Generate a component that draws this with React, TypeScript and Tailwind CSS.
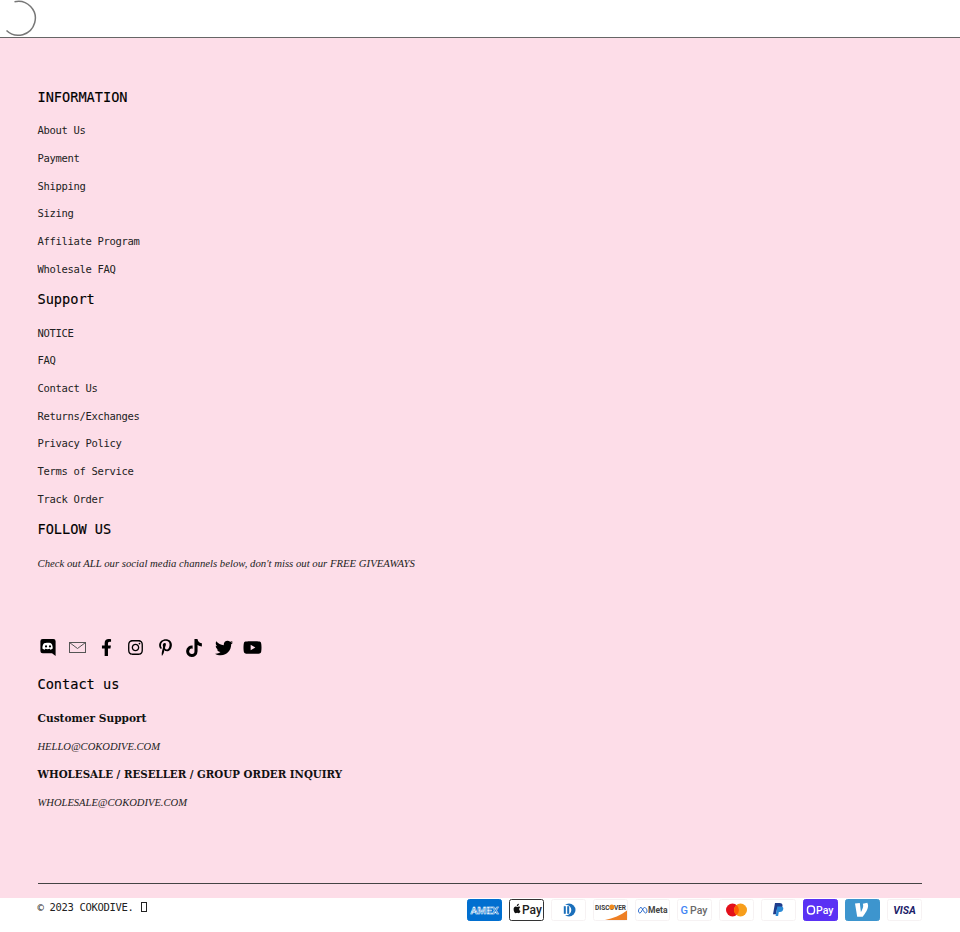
import { FaFacebookF, FaInstagram, FaPinterestP, FaTiktok, FaTwitter, FaYoutube } from "react-icons/fa";

const mono = "font-['DejaVu_Sans_Mono','Liberation_Mono',monospace]";
const serif = "font-['Liberation_Serif','DejaVu_Serif',serif]";
const bold = "font-['DejaVu_Serif',serif] font-bold";

function Heading({ children }: { children: string }) {
  return <h3 className={`${mono} text-[13.6px] leading-[20px] text-black mb-[10.3px] -ml-[0.5px] [-webkit-text-stroke:0.15px_#000]`}>{children}</h3>;
}

function Links({ items }: { items: string[] }) {
  return (
    <ul className="mb-[5.7px]">
      {items.map((t) => (
        <li key={t} className={`${mono} text-[10.5px] tracking-[-0.32px] -ml-[0.5px] leading-[27.7px] text-[#222]`}>{t}</li>
      ))}
    </ul>
  );
}

function Card({ children, bg = "#fff", border = "#f6f2f3" }: { children: React.ReactNode; bg?: string; border?: string }) {
  return (
    <svg width="35" height="22" viewBox="0 0 35 22" className="shrink-0">
      <rect x="0.5" y="0.5" width="34" height="21" rx="2" fill={bg} stroke={border} />
      {children}
    </svg>
  );
}

const sans = "Roboto, 'Liberation Sans', sans-serif";

function Payments() {
  return (
    <div className="flex gap-[7px]">
      <Card bg="#016fd0" border="#016fd0">
        <text x="17.5" y="14.5" textAnchor="middle" fontSize="9.5" fontWeight="700" fontFamily={sans} fill="#016fd0" stroke="#fff" strokeWidth="0.5" textLength="28" lengthAdjust="spacingAndGlyphs">AMEX</text>
      </Card>
      <Card border="#333">
        <path d="M9.2 6.600c.5-.6.8-1.100.7-1.900-.7 0-1.300.4-1.600.9-.4.5-.6 1-.5 1.600.6 0 1-.2 1.400-.6zM9.900 7.600c-.8 0-1.200.4-1.700.4s-1-.4-1.600-.4c-.9 0-2 .9-2 2.600 0 1.800 1.200 4 2.100 4 .5 0 .9-.4 1.500-.4s.9.4 1.500.4c.8 0 1.500-1.300 1.800-2.300-.9-.4-1.300-1.100-1.300-2 0-.8.4-1.400 1-1.700-.4-.5-1-.6-1.300-.6z" fill="#111" />
        <text x="13" y="15" fontSize="12" fontWeight="500" fontFamily={sans} fill="#222">Pay</text>
      </Card>
      <Card>
        <circle cx="18" cy="11" r="6.500" fill="#1a6fbb" />
        <circle cx="15" cy="11" r="5.300" fill="#fff" />
        <rect x="12.800" y="7.200" width="2" height="7.600" fill="#1a6fbb" />
        <rect x="16.200" y="7.200" width="2" height="7.600" fill="#1a6fbb" />
      </Card>
      <Card>
        <path d="M34 11.500 C28 16 20 19.500 12 21 L34 21 Z" fill="#ee7f24" />
        <text x="2" y="10.500" fontSize="7.200" fontWeight="700" fontFamily={sans} fill="#3a3a3a" textLength="31" lengthAdjust="spacingAndGlyphs">DISCOVER</text>
        <circle cx="18.800" cy="8" r="2.500" fill="#f08a1d" />
      </Card>
      <Card>
        <path d="M6 8.500c-1.500 0-2.500 2-2.500 3.500s.8 2 1.500 2c1.700 0 2.500-5.500 4.500-5.500 1.500 0 2.500 2 2.500 3.500s-.8 2-1.500 2c-1.700 0-3-5.500-4.500-5.500z" fill="none" stroke="#1a5fc8" strokeWidth="0.900" />
        <text x="13" y="14.300" fontSize="8.500" fontWeight="700" fontFamily={sans} fill="#444">Meta</text>
      </Card>
      <Card>
        <text x="3.500" y="15" fontSize="11" fontWeight="500" fontFamily={sans} fill="#4285f4">G</text>
        <text x="13" y="15" fontSize="10.500" fontWeight="500" fontFamily={sans} fill="#6a6a6a">Pay</text>
      </Card>
      <Card>
        <circle cx="13.500" cy="11" r="6.500" fill="#e3101b" />
        <circle cx="21.500" cy="11" r="6.500" fill="#f79e1b" />
        <path d="M17.500 5.900a6.500 6.500 0 0 1 0 10.200a6.500 6.500 0 0 1 0-10.200z" fill="#ff5f00" />
      </Card>
      <Card>
        <path d="M14 4h4.500c2.200 0 3.300 1.100 3 3-.4 2.400-2 3.500-4.200 3.500h-1.400l-.9 4.700h-3z" fill="#1f3d8c" />
        <path d="M16.300 7.500h3.700c1.700 0 2.600.9 2.300 2.600-.3 2.100-1.600 3-3.400 3h-1.100l-.7 4h-2.500z" fill="#2a8ad6" />
      </Card>
      <Card bg="#5a31f4" border="#5a31f4">
        <rect x="4.500" y="7" width="7" height="8" rx="3" fill="none" stroke="#fff" strokeWidth="1.400" />
        <text x="13" y="15" fontSize="10.500" fontWeight="500" fontFamily={sans} fill="#fff">Pay</text>
      </Card>
      <Card bg="#3d95ce" border="#3d95ce">
        <path d="M22.300 5c.5.900.8 1.800.8 3 0 3.500-3 8-5.400 11h-5.500L10 5.800l4.800-.5 1.100 8.900c1-1.700 2.300-4.300 2.300-6.100 0-1-.2-1.700-.4-2.200z" fill="#fff" transform="translate(0 -1.200)" />
      </Card>
      <Card>
        <text x="17.500" y="15" textAnchor="middle" fontSize="10.500" fontWeight="700" fontStyle="italic" fontFamily={sans} fill="#1a2168">VISA</text>
      </Card>
    </div>
  );
}

function Discord() {
  return (
    <svg width="16" height="17" viewBox="0 0 17 19">
      <path d="M2.500 0h12A2.500 2.500 0 0 1 17 2.500V19l-4-3.200H2.500A2.500 2.500 0 0 1 0 13.300V2.500A2.500 2.500 0 0 1 2.500 0z" fill="#000" />
      <path d="M5.800 4.600c1.800-.5 3.600-.5 5.400 0 1 .4 1.600 1 1.900 1.900.5 1.300.7 2.700.7 4.100-.7.700-1.700 1.100-2.700 1.300l-.6-.9c-1.600.5-3.400.5-5 0l-.6.900c-1-.2-2-.6-2.700-1.300 0-1.400.2-2.800.7-4.100.3-.9.900-1.500 1.900-1.900z" fill="#fff" />
      <circle cx="6.300" cy="8.300" r="1.200" fill="#000" />
      <circle cx="10.700" cy="8.300" r="1.200" fill="#000" />
    </svg>
  );
}

function Cell({ children }: { children: React.ReactNode }) {
  return <span className="w-[29.25px] flex justify-center items-center">{children}</span>;
}

export default function App() {
  return (
    <div className="min-h-[932px] bg-white overflow-hidden">
      <header className="h-[38px] bg-white border-b border-[#666]">
        <svg width="40" height="37" viewBox="0 0 40 37" className="block">
          <path d="M14.500 1.700 A17 17 0 1 1 6.500 30.500" fill="none" stroke="#777" strokeWidth="1.500" />
        </svg>
      </header>

      <main className="bg-[#fddde8] h-[860px] px-[38px] pt-[49px]">
        <Heading>INFORMATION</Heading>
        <Links items={["About Us", "Payment", "Shipping", "Sizing", "Affiliate Program", "Wholesale FAQ"]} />
        <Heading>Support</Heading>
        <Links items={["NOTICE", "FAQ", "Contact Us", "Returns/Exchanges", "Privacy Policy", "Terms of Service", "Track Order"]} />
        <Heading>FOLLOW US</Heading>
        <p className={`${serif} italic text-[10.74px] leading-[28px] text-[#222] -ml-[0.5px]`}>
          Check out ALL our social media channels below, don't miss out our FREE GIVEAWAYS
        </p>
        <div className="flex items-center -ml-[4.500px] mt-[60.2px] h-[20px] text-black">
          <Cell><Discord /></Cell>
          <Cell>
            <svg width="17" height="11" viewBox="0 0 17 11">
              <rect x="0.500" y="0.500" width="16" height="10" fill="none" stroke="#555" />
              <path d="M0.500 0.500 L8.500 6.500 L16.500 0.500" fill="none" stroke="#555" />
            </svg>
          </Cell>
          <Cell><FaFacebookF className="w-[17px] h-[17px]" /></Cell>
          <Cell><FaInstagram className="w-[17px] h-[17px]" /></Cell>
          <Cell><FaPinterestP className="w-[17px] h-[17px]" /></Cell>
          <Cell><FaTiktok className="w-[18px] h-[18px]" /></Cell>
          <Cell><FaTwitter className="w-[18px] h-[18px]" /></Cell>
          <Cell><FaYoutube className="w-[19px] h-[19px]" /></Cell>
        </div>
        <div className="mt-[16px]">
          <Heading>Contact us</Heading>
        </div>
        <p className={`${bold} text-[10.6px] leading-[28px] text-[#111] -ml-[0.5px]`}>Customer Support</p>
        <p className={`${serif} italic text-[10.55px] leading-[28px] mt-[0.7px] -mb-[0.7px] text-[#222] -ml-[0.5px]`}>HELLO@COKODIVE.COM</p>
        <p className={`${bold} text-[10.26px] leading-[28px] text-[#111] -ml-[0.5px]`}>WHOLESALE / RESELLER / GROUP ORDER INQUIRY</p>
        <p className={`${serif} italic text-[10.55px] leading-[28px] mt-[0.7px] text-[#222] -ml-[0.5px]`}>WHOLESALE@COKODIVE.COM</p>
      </main>

      <footer className="relative px-[38px]">
        <div className="absolute left-[38px] right-[38px] top-[-15px] border-t border-[#444]" />
        <div className="flex justify-between items-start pt-px">
          <span className={`${mono} flex items-center text-[10.5px] tracking-[-0.32px] -ml-[0.5px] leading-[14px] mt-[1px] text-[#222]`}>
            © 2023 COKODIVE.
            <span className="inline-block w-[6px] h-[10px] ml-[7px] border border-[#222]" />
          </span>
          <Payments />
        </div>
      </footer>
    </div>
  );
}
